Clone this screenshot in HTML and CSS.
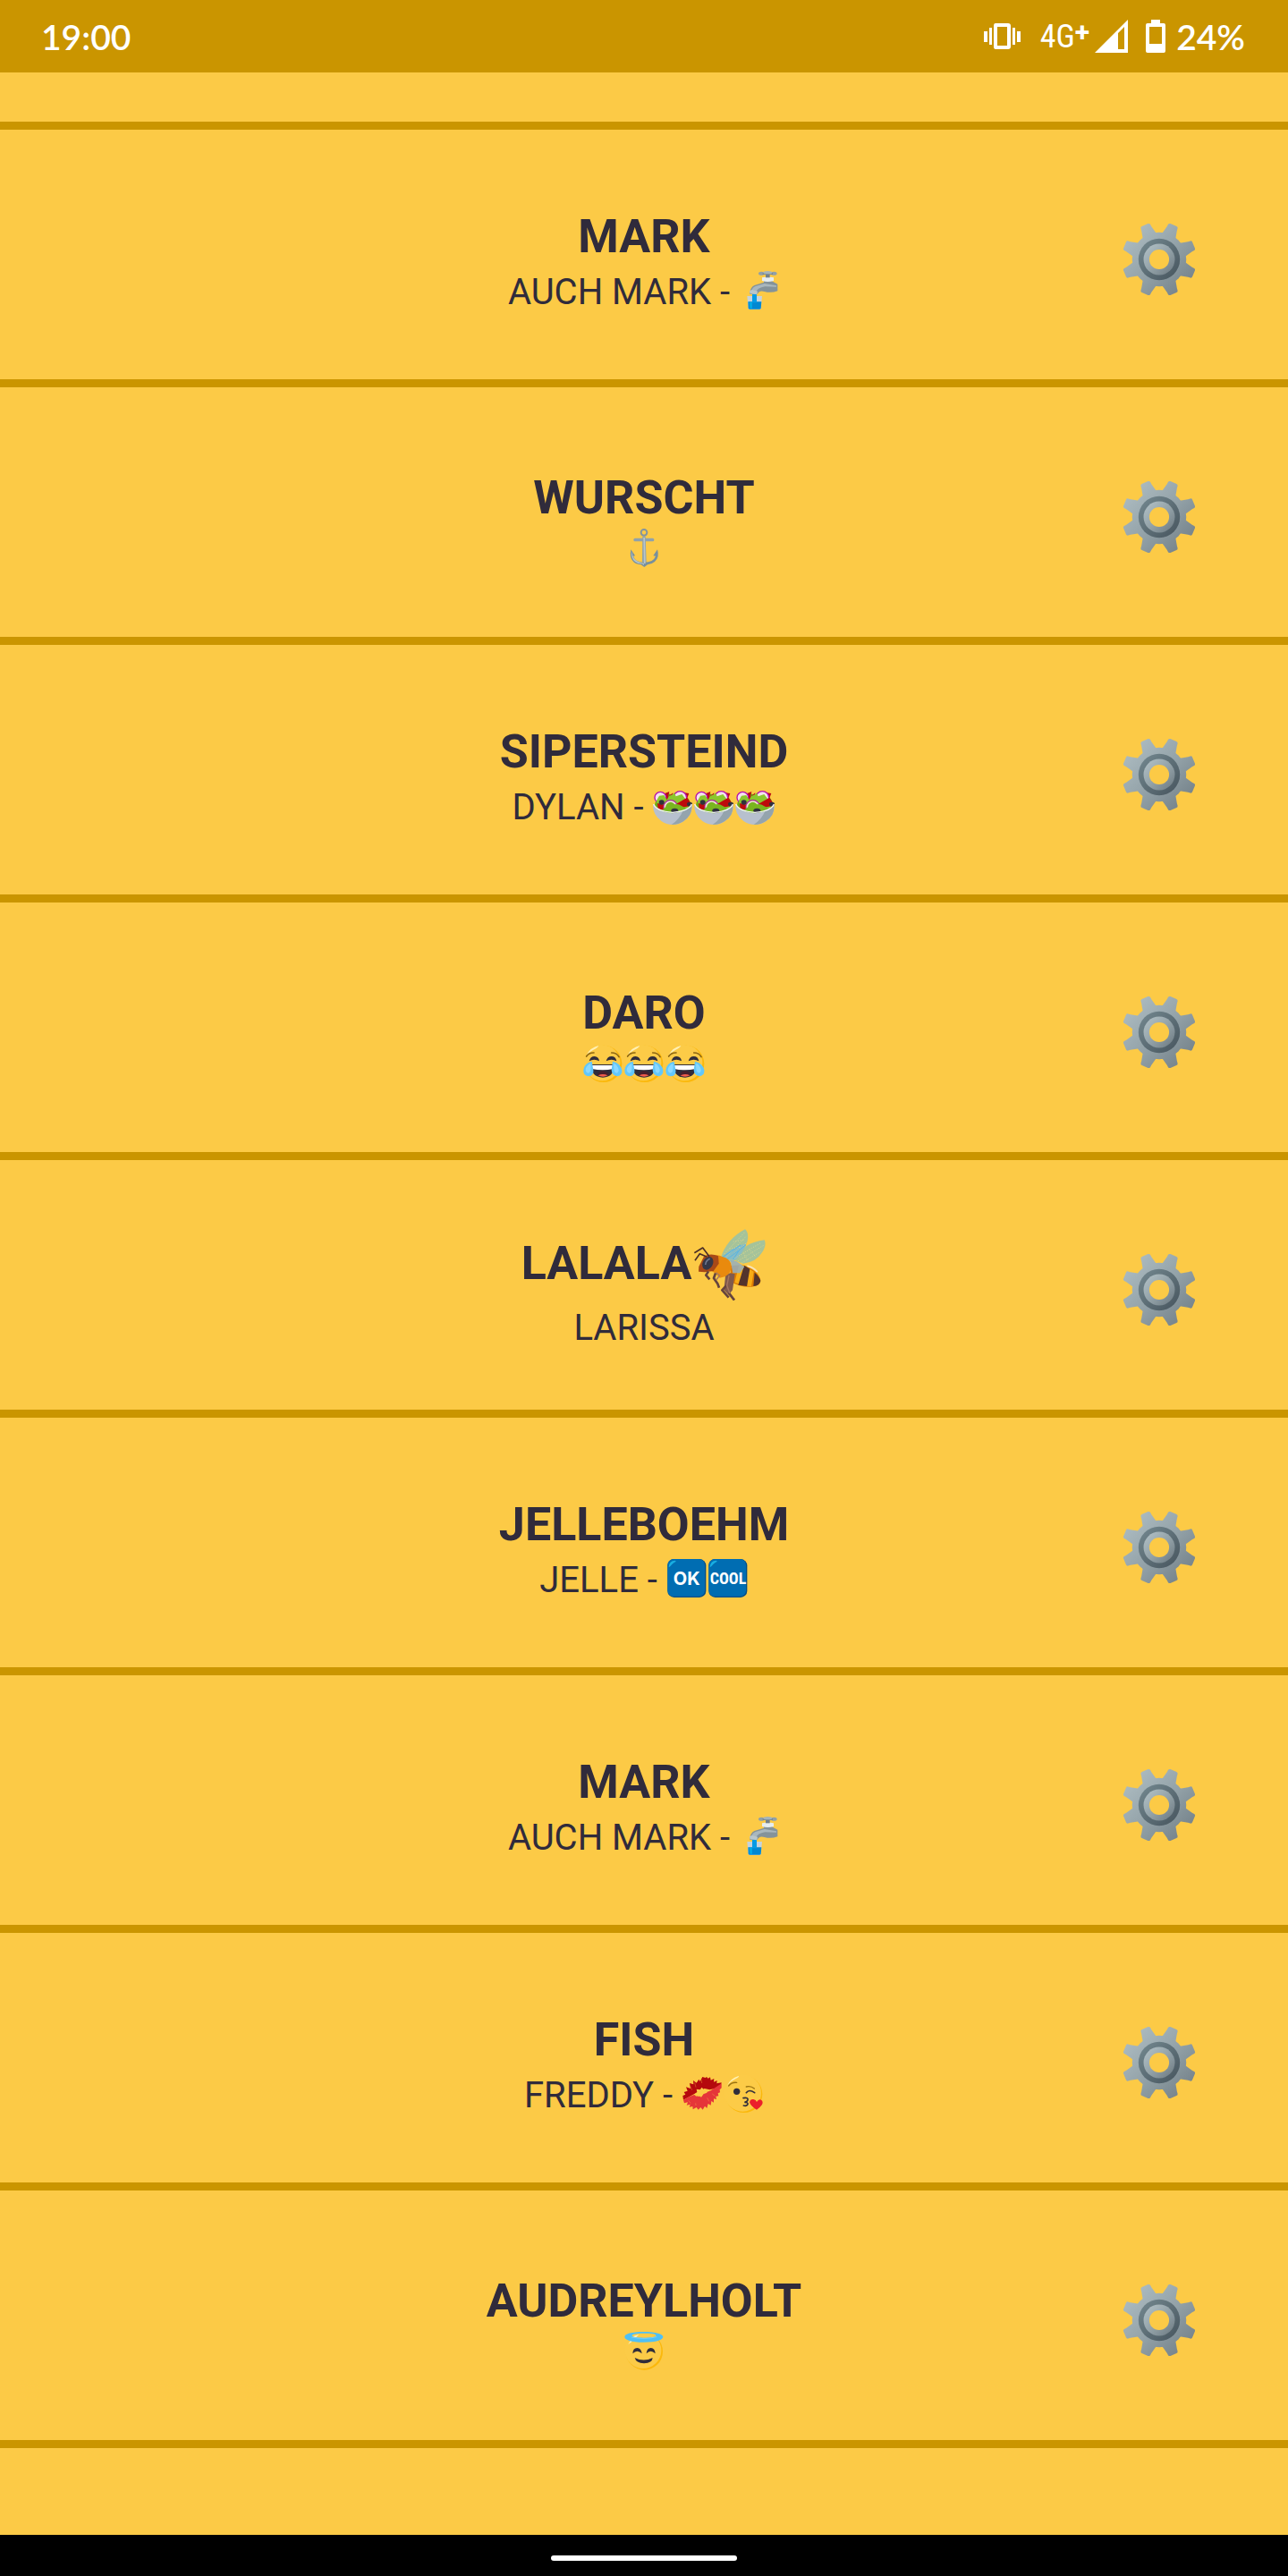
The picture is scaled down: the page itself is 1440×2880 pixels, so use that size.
FILE: index.html
```html
<!DOCTYPE html>
<html lang="de">
<head>
<meta charset="utf-8">
<meta name="viewport" content="width=device-width, initial-scale=1">
<title>Kontakte</title>
<link rel="stylesheet" href="styles.css">
</head>
<body>
<svg class="sprite" aria-hidden="true">
  <defs>
    <linearGradient id="steel" x1="0" y1="0" x2="1" y2="1"><stop offset="0" stop-color="#b4c3c8"/><stop offset=".5" stop-color="#94a3a9"/><stop offset="1" stop-color="#6b7880"/></linearGradient>
    <linearGradient id="steel-dark" x1="0" y1="0" x2="1" y2="1"><stop offset="0" stop-color="#748990"/><stop offset="1" stop-color="#46545d"/></linearGradient>
    <path id="tooth" d="M-24-84-18-111-17-119Q-16-124-11-124H11Q16-124 17-119L18-111 24-84V-60H-24Z"/>
    <mask id="gear-shape" maskUnits="userSpaceOnUse" x="-124" y="-124" width="248" height="248">
      <g fill="#fff">
        <circle r="90"/>
        <use href="#tooth" transform="rotate(22.5)"/><use href="#tooth" transform="rotate(67.5)"/>
        <use href="#tooth" transform="rotate(112.5)"/><use href="#tooth" transform="rotate(157.5)"/>
        <use href="#tooth" transform="rotate(202.5)"/><use href="#tooth" transform="rotate(247.5)"/>
        <use href="#tooth" transform="rotate(292.5)"/><use href="#tooth" transform="rotate(337.5)"/>
      </g>
      <circle r="33" fill="#000"/>
    </mask>
  </defs>

  <symbol id="gear" viewBox="-122 -122 244 244">
    <g mask="url(#gear-shape)">
      <rect x="-124" y="-124" width="248" height="248" fill="url(#steel)"/>
      <circle r="69" fill="url(#steel-dark)"/>
      <circle r="52" fill="url(#steel)"/>
    </g>
  </symbol>

  <symbol id="tap" viewBox="0 0 138 129">
    <path fill="#c6d3dc" d="M28 84h50l-4 42q-1 3-5 3H37q-4 0-5-3Z"/>
    <path fill="#0288d1" d="M31 103H76L74 125q-1 3-5 3H37q-4 0-5-3Z"/>
    <path fill="#03a9e4" d="M35 104h10v21h-8Z"/>
    <path fill="#039be5" d="M45 76h15v30H45Z"/>
    <path fill="#84939a" d="M37 78Q37 56 52 48L84 38V26H111V34L130 44V67Q108 75 86 69 68 63 62 78Z"/>
    <path fill="#a9b7bd" d="M42 72Q43 56 56 51L86 42 126 49V53L88 52Q62 56 57 72Z"/>
    <path fill="#b9c6cb" d="M36 66 45 63 63 68 61 79 38 76Z"/>
    <path fill="#e6edef" d="M78 22Q97 17 117 22V33Q97 39 78 33Z"/>
    <path fill="#758087" d="M90 10h14v12H90Z"/>
    <ellipse cx="76" cy="8" rx="10" ry="6" fill="#91a0a7"/><ellipse cx="118" cy="8" rx="10" ry="6" fill="#91a0a7"/>
    <path fill="#7b8990" d="M80 6h34v6H80Z"/><ellipse cx="97" cy="5" rx="15" ry="5" fill="#a5b4ba"/>
  </symbol>

  <symbol id="anchor" viewBox="0 0 138 129">
    <circle cx="69" cy="13" r="10" fill="none" stroke="#84959e" stroke-width="6"/>
    <rect x="34" y="32" width="69" height="11" rx="5" fill="#90a2ab"/>
    <path fill="#90a2ab" d="M64 26H74L77 113H63Z"/>
    <path fill="#78909c" d="M25 70 39 91 33 92Q39 113 69 113 101 113 108 92L100 91 114 70Q122 97 105 111 94 120 81 121L70 129 59 121Q39 119 31 108 20 95 25 70Z"/>
    <path fill="#b8c6cb" d="M26 73 28 93Q34 117 62 118L69 122 67 30H72L74 118 58 114Q36 109 31 91Z"/>
  </symbol>

  <symbol id="salad" viewBox="0 0 138 129">
    <path fill="#69a815" d="M9 64Q12 40 31 36 46 16 66 29 86 12 102 31 128 36 129 65L110 84H28Z"/>
    <path fill="#bb0b12" d="M28 30 58 18 54 35 70 22 66 45 28 52ZM100 20 124 24 115 47Z"/>
    <circle cx="28" cy="38" r="19" fill="#f6e3ee" stroke="#b40fae" stroke-width="4"/>
    <circle cx="94" cy="39" r="22" fill="#f6e3ee" stroke="#b40fae" stroke-width="4"/>
    <path fill="#8bc72d" d="M14 50 24 32 40 30 50 46 56 34 76 24 80 34 100 27 112 43 100 60 121 67 123 79 35 83 44 67 17 59Z"/>
    <path fill="#bd0b0b" d="M18 57 42 62 40 82 20 76ZM76 62 118 38 128 54 128 66 98 72Z"/>
    <circle cx="62" cy="70" r="23" fill="#79b51f" stroke="#b416ab" stroke-width="4"/>
    <circle cx="62" cy="70" r="19" fill="none" stroke="#f1e2d8" stroke-width="5"/>
    <path fill="#79b51f" d="M34 80Q47 64 62 67 82 54 99 66L122 78 101 95H45Z"/>
    <ellipse cx="32" cy="54" rx="9" ry="8" fill="#30303e"/><ellipse cx="76" cy="82" rx="12" ry="8" fill="#30303e"/><ellipse cx="126" cy="60" rx="9" ry="7" fill="#30303e"/>
    <path fill="#b7c0ce" d="M4 60Q12 84 69 91 126 84 134 60 138 94 107 117 90 129 69 129 48 129 31 117 0 94 4 60Z"/>
    <path fill="#94a4ad" d="M103 84Q126 75 133 66 136 98 105 118 90 129 65 129 91 112 103 84Z"/>
    <path fill="none" stroke="#f2f5f7" stroke-width="4" d="M5 60Q15 84 69 88 123 84 133 60"/>
  </symbol>

  <symbol id="joy" viewBox="0 0 138 129">
    <circle cx="71" cy="67" r="62" fill="#fbb80b"/><circle cx="67" cy="64" r="60" fill="#fccb47"/>
    <path fill="#fff0b6" d="M15 37Q27 12 55 6 52 14 36 21 22 29 15 37Z"/>
    <path fill="none" stroke="#8d6712" stroke-width="5" stroke-linecap="round" d="M14 42Q23 29 39 30M98 30Q116 30 123 44"/>
    <path fill="#302d3b" d="M23 58Q27 42 41 42 55 43 57 58 40 49 23 58ZM80 58Q84 42 98 42 112 42 115 58 98 49 80 58Z"/>
    <path fill="#302d3b" d="M30 69H106Q108 112 69 113 29 112 30 69Z"/>
    <path fill="#fff" d="M32 72H104V84Q69 92 32 84Z"/><path fill="#46202d" d="M57 95Q69 86 81 95L91 103Q71 115 49 104Z"/><path fill="#f35c4c" d="M53 106Q69 98 85 106 70 114 53 106Z"/>
    <path fill="#62c7fb" d="M32 59Q7 64 4 88 3 107 20 109 40 108 37 88ZM102 59Q127 64 133 87 135 106 118 109 99 107 98 88Z"/>
    <path fill="#8ad8ff" d="M28 65Q11 75 11 88 12 97 20 98 31 97 28 65ZM106 65Q121 74 122 88 122 97 115 98 103 97 106 65Z"/>
  </symbol>

  <symbol id="lips" viewBox="0 0 138 129">
    <path fill="#b5090d" d="M6 86 4 72 13 68 8 60 20 56 15 43 30 48 27 30 40 34 39 21 50 29 58 17 62 24 70 9 80 12 84 9 89 14 96 10 98 20 109 15 108 26 119 21 118 31 134 28 130 44 94 52 77 48 43 66Z"/>
    <path fill="#e53539" d="M6 87 22 77 42 69 58 75 79 62 98 55 134 31 134 46 128 52 129 61 122 64 124 73 115 74 117 84 108 82 108 95 100 90 98 104 89 99 85 114 78 107 71 119 64 111 56 119 50 111 38 118 37 108 26 110 29 101 17 104 21 94 9 97Z"/>
    <path fill="#fccb47" d="M44 67 52 60 50 50 62 52 68 44 74 51 87 51 82 57 86 62 74 66 66 77 58 71 48 74Z"/>
    <path fill="none" stroke="#fccb47" stroke-width="1" d="M29 40 35 53M44 28 48 44M66 18 68 30M23 88 30 97M47 97 48 105M86 79 92 91M103 66 112 73"/>
  </symbol>

  <symbol id="kiss" viewBox="0 0 138 129">
    <circle cx="71" cy="67" r="62" fill="#fbb80b"/><circle cx="67" cy="63" r="62" fill="#fccb47"/>
    <path fill="#fff0b6" d="M14 40Q25 14 53 6 58 8 44 15 25 24 14 40Z"/>
    <path fill="none" stroke="#9a7210" stroke-width="4" stroke-linecap="round" d="M20 39Q30 26 47 28M79 42Q94 38 106 48"/>
    <circle cx="47" cy="58" r="11" fill="#302d3b"/><path fill="none" stroke="#302d3b" stroke-width="5" stroke-linecap="round" d="M79 62Q88 49 107 62"/>
    <path fill="none" stroke="#302d3b" stroke-width="5" stroke-linecap="round" d="M69 80Q87 77 84 86 83 93 73 94 86 94 84 101 81 108 70 105"/>
    <path fill="#eb202b" d="M114 119Q93 107 90 94 92 83 103 84 112 86 114 93 121 82 129 86 137 92 132 102 124 113 114 119Z"/>
  </symbol>

  <symbol id="halo" viewBox="0 0 138 129">
    <circle cx="70" cy="66" r="62" fill="#fbb80b"/><circle cx="66" cy="62" r="61" fill="#fccb47"/>
    <path fill="#fff3c4" d="M16 43Q18 34 27 27L28 34Q21 37 16 43ZM30 16 52 9 42 19Z"/>
    <path fill="#4fc0f5" fill-rule="evenodd" d="M68 0C110 0 133 8 133 17S110 35 68 35 4 27 4 17 26 0 68 0ZM68 5C42 5 29 8 29 13S44 20 68 20 109 18 109 12 94 5 68 5Z"/>
    <path fill="none" stroke="#79d0f6" stroke-width="3" d="M27 18Q69 27 112 17"/>
    <path fill="#302d3b" d="M31 73Q32 54 46 54 60 55 62 73 46 57 31 73ZM77 73Q79 54 92 54 106 55 107 73 91 57 77 73ZM38 87Q68 102 98 87 97 105 69 106 42 105 38 87Z"/>
  </symbol>

  <symbol id="bee" viewBox="-6 0 252 240">
    <path fill="#a5c39a" d="M92 98Q112 34 174 1 188 12 182 40 171 81 133 103Z"/>
    <path fill="#a5c39a" d="M135 103Q169 45 239 37 247 54 231 79 211 112 167 116Z"/>
    <path fill="#7dbbd4" d="M95 98Q131 58 178 49 166 88 131 112Z" opacity=".75"/>
    <path fill="none" stroke="#d9d790" stroke-width="3" stroke-dasharray="3 5" d="M104 84 172 12M111 94 178 24M119 98 180 46M139 98 226 47M151 107 236 55M163 114 226 76M122 66 157 61M134 42 172 37M188 67 209 93M169 80 183 107"/>
    <path fill="none" stroke="#55b4e5" stroke-width="3" d="M96 96 159 54M112 103 177 53M157 67 134 102"/>
    <path fill="#dc7a02" d="M125 123 164 121Q221 138 226 174 224 191 197 194 155 196 125 176Z"/>
    <path fill="#f8ac15" d="M154 119 171 121 158 185 139 180ZM184 131 203 143 195 193 181 191Z"/>
    <path fill="#53342c" d="M171 122 190 134 180 192 151 188ZM206 146Q222 159 226 174 223 191 202 192Z"/>
    <path fill="#e98a0d" d="M63 91Q81 83 98 93 127 99 129 129L118 157 89 164 73 148 51 135Z"/>
    <path fill="#a84917" d="M36 92Q59 79 84 91L86 116 68 141 39 145 18 143 19 126Z"/>
    <ellipse cx="49" cy="115" rx="17" ry="23" transform="rotate(28 49 115)" fill="#343748"/><path fill="none" stroke="#6e7890" stroke-width="5" d="M41 120Q42 106 56 100"/>
    <path fill="none" stroke="#4c2f27" stroke-width="5" stroke-linejoin="round" d="M4 80 32 63 54 92M6 106 22 83 45 93"/>
    <path fill="#805a4c" d="M108 159 123 148 140 151 132 205 119 221 103 205Z"/>
    <path fill="none" stroke="#65443d" stroke-width="8" stroke-linejoin="round" d="M51 142 43 155 55 169M75 148 69 165 82 184 87 197M111 190 97 205 119 230M119 214 138 239"/>
    <path fill="none" stroke="#a57761" stroke-width="4" d="M76 146 89 156 77 171M120 156 113 190 123 216"/>
    <path fill="#94afc0" d="M125 105 145 108 172 127 157 148 133 148Z" opacity=".85"/>
    <path fill="none" stroke="#f8e4bd" stroke-width="5" stroke-linecap="round" d="M183 124Q202 129 214 143"/>
  </symbol>

  <symbol id="badge" viewBox="0 0 138 129">
    <rect x="4" width="129" height="129" rx="22" fill="#004e87"/><rect x="4" width="125" height="125" rx="20" fill="#006db2"/>
    <path fill="#18aee1" d="M8 27Q9 6 29 5 36 7 27 11 20 16 14 23 9 28 8 27Z"/>
  </symbol>
</svg>

<div class="screen">
  <header class="status">
    <time class="status-text">19:00</time>
    <div class="indicators">
      <svg class="vibrate" viewBox="0 0 41 30" role="img" aria-label="Vibration"><path fill="#fff" fill-rule="evenodd" d="M13 0h14q3 0 3 3v23q0 3-3 3H13q-2 0-2-3V3q0-3 2-3ZM15 4v21h11V4ZM0 9h4v12H0ZM6 5h3v19H6ZM32 5h3v19h-3ZM37 9h4v12h-4Z"/></svg>
      <span class="network">4G<span class="plus">+</span></span>
      <svg class="signal" viewBox="0 0 37 37" role="img" aria-label="Signal"><path fill="#fff" fill-rule="evenodd" d="M37 0V37H0ZM33 8 26 15V33H33Z"/></svg>
      <svg class="battery" viewBox="0 0 22 37" role="img" aria-label="Akku"><path fill="#fff" fill-rule="evenodd" d="M6 0h10v4h4q2 0 2 2v29q0 2-2 2H2q-2 0-2-2V6q0-2 2-2h4ZM4 8v19h14V8Z"/></svg>
      <span class="status-text">24%</span>
    </div>
  </header>

  <main class="content">
    <ul class="contacts">
      <li class="contact">
        <div class="label"><h2 class="name">MARK</h2><p class="detail">AUCH MARK - <svg class="emoji"><use href="#tap"/></svg></p></div>
        <button class="settings" type="button" aria-label="Einstellungen"><svg class="gear"><use href="#gear"/></svg></button>
      </li>
      <li class="contact">
        <div class="label"><h2 class="name">WURSCHT</h2><p class="detail detail-emoji"><svg class="emoji"><use href="#anchor"/></svg></p></div>
        <button class="settings" type="button" aria-label="Einstellungen"><svg class="gear"><use href="#gear"/></svg></button>
      </li>
      <li class="contact">
        <div class="label"><h2 class="name">SIPERSTEIND</h2><p class="detail">DYLAN - <svg class="emoji"><use href="#salad"/></svg><svg class="emoji"><use href="#salad"/></svg><svg class="emoji"><use href="#salad"/></svg></p></div>
        <button class="settings" type="button" aria-label="Einstellungen"><svg class="gear"><use href="#gear"/></svg></button>
      </li>
      <li class="contact">
        <div class="label"><h2 class="name">DARO</h2><p class="detail detail-emoji"><svg class="emoji"><use href="#joy"/></svg><svg class="emoji"><use href="#joy"/></svg><svg class="emoji"><use href="#joy"/></svg></p></div>
        <button class="settings" type="button" aria-label="Einstellungen"><svg class="gear"><use href="#gear"/></svg></button>
      </li>
      <li class="contact">
        <div class="label label-tall"><h2 class="name">LALALA<svg class="emoji-large"><use href="#bee"/></svg></h2><p class="detail">LARISSA</p></div>
        <button class="settings" type="button" aria-label="Einstellungen"><svg class="gear"><use href="#gear"/></svg></button>
      </li>
      <li class="contact">
        <div class="label"><h2 class="name">JELLEBOEHM</h2><p class="detail">JELLE - <svg class="emoji" viewBox="0 0 138 129"><use href="#badge" width="138" height="129"/><text class="badge-text" x="68" y="86" font-size="60">OK</text></svg><svg class="emoji" viewBox="0 0 138 129"><use href="#badge" width="138" height="129"/><text class="badge-text badge-narrow" x="69" y="83" font-size="54">COOL</text></svg></p></div>
        <button class="settings" type="button" aria-label="Einstellungen"><svg class="gear"><use href="#gear"/></svg></button>
      </li>
      <li class="contact">
        <div class="label"><h2 class="name">MARK</h2><p class="detail">AUCH MARK - <svg class="emoji"><use href="#tap"/></svg></p></div>
        <button class="settings" type="button" aria-label="Einstellungen"><svg class="gear"><use href="#gear"/></svg></button>
      </li>
      <li class="contact">
        <div class="label"><h2 class="name">FISH</h2><p class="detail">FREDDY - <svg class="emoji"><use href="#lips"/></svg><svg class="emoji"><use href="#kiss"/></svg></p></div>
        <button class="settings" type="button" aria-label="Einstellungen"><svg class="gear"><use href="#gear"/></svg></button>
      </li>
      <li class="contact">
        <div class="label"><h2 class="name">AUDREYLHOLT</h2><p class="detail detail-emoji"><svg class="emoji"><use href="#halo"/></svg></p></div>
        <button class="settings" type="button" aria-label="Einstellungen"><svg class="gear"><use href="#gear"/></svg></button>
      </li>
    </ul>
  </main>

  <footer class="navbar"><div class="pill"></div></footer>
</div>
</body>
</html>
```
FILE: styles.css
```css
* {
  box-sizing: border-box;
}

body {
  margin: 0;
  background: #fcca46;
  color: #302b3b;
  font-family: Roboto, "Liberation Sans", sans-serif;
}

.sprite {
  position: absolute;
  width: 0;
  height: 0;
}

.screen {
  display: flex;
  flex-direction: column;
  min-height: 100vh;
}

/* Status bar */
.status {
  display: flex;
  align-items: center;
  justify-content: space-between;
  height: 81px;
  padding: 0 48px 0 46px;
  background: #ca9500;
  color: #fff;
}

.status-text {
  font: 600 39px/48px Lato, sans-serif;
}

.indicators {
  display: flex;
  align-items: center;
}

.vibrate {
  width: 41px;
  height: 30px;
  margin-right: 22px;
}

.network {
  display: flex;
  align-items: center;
  margin-right: 6px;
  font: 400 36px/48px "Roboto Condensed", "Liberation Sans Narrow", Roboto, sans-serif;
}

.plus {
  padding-bottom: 10px;
  font: 700 30px/36px Roboto, sans-serif;
}

.signal {
  width: 37px;
  height: 37px;
  margin-right: 20px;
}

.battery {
  width: 22px;
  height: 37px;
  margin-right: 12px;
}

/* Contact list */
.content {
  flex: 1;
  padding-top: 55px;
}

.contacts {
  margin: 0;
  padding: 0;
  border-top: 9px solid #ca9500;
  list-style: none;
}

.contact {
  display: grid;
  grid-template-columns: 1fr auto 1fr;
  align-items: center;
  min-height: 288px;
  border-bottom: 9px solid #ca9500;
}

.label {
  grid-column: 2;
  padding-top: 25px;
  text-align: center;
}

.name,
.detail {
  margin: 0;
  white-space: nowrap;
}

.name {
  height: 60px;
  font-size: 52px;
  line-height: 60px;
  font-weight: 700;
}

.detail {
  height: 64px;
  font-size: 40px;
  line-height: 64px;
}

.detail-emoji {
  height: 56px;
  line-height: 56px;
}

.label-tall .name,
.label-tall .detail {
  height: 72px;
  line-height: 72px;
}

.emoji {
  width: 46px;
  height: 43px;
  vertical-align: -6px;
}

/* The negative margin keeps the tall glyph from stretching its line. */
.emoji-large {
  width: 84px;
  height: 80px;
  margin: -24px 0;
  vertical-align: baseline;
}

.settings {
  grid-column: 3;
  justify-self: end;
  margin-right: 103px;
  padding: 10px 0 0;
  border: 0;
  background: none;
  cursor: pointer;
}

.gear {
  display: block;
  width: 82px;
  height: 82px;
}

.badge-text {
  fill: #fff;
  font-family: Inter, sans-serif;
  font-weight: 700;
  text-anchor: middle;
}

.badge-narrow {
  font-family: "Roboto Condensed", "Liberation Sans Narrow", sans-serif;
}

/* Gesture bar */
.navbar {
  display: flex;
  align-items: center;
  justify-content: center;
  height: 46px;
  padding-top: 6px;
  background: #000;
}

.pill {
  width: 208px;
  height: 6px;
  border-radius: 3px;
  background: #fff;
}
```
